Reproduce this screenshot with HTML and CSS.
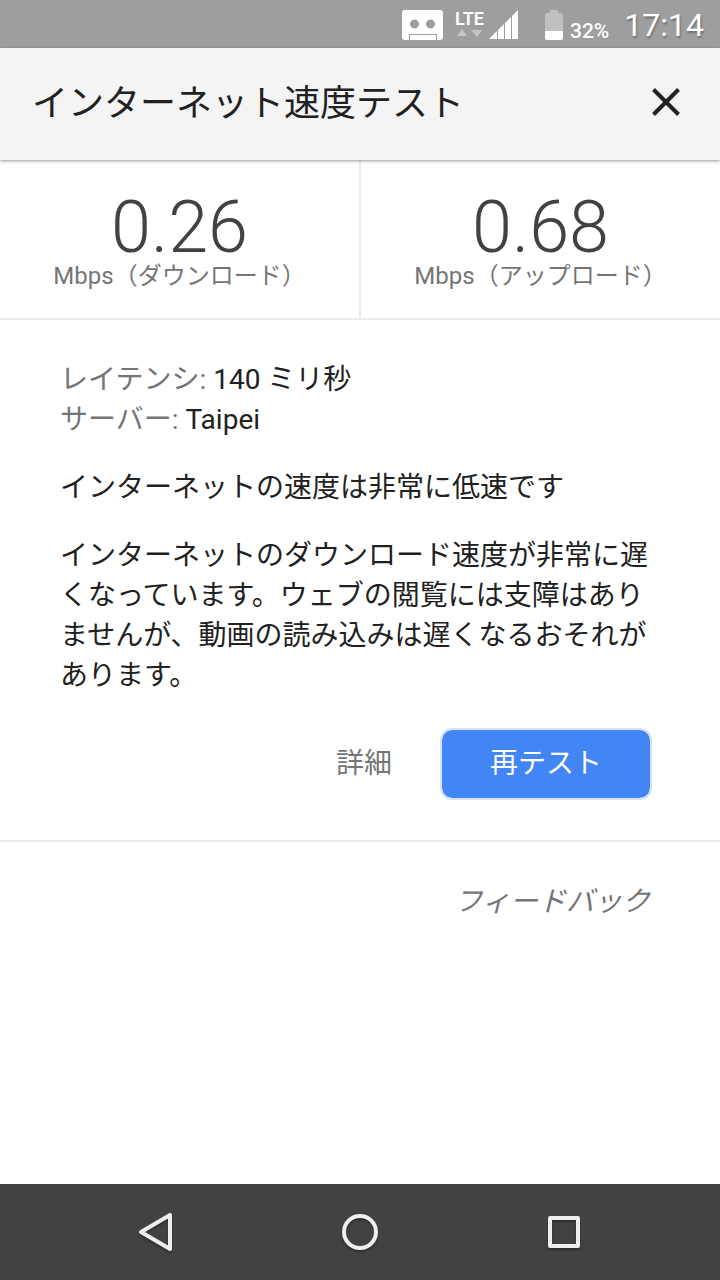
FILE: index.html
```html
<!DOCTYPE html>
<html lang="ja">
<head>
    <meta charset="UTF-8">
    <meta name="viewport" content="width=device-width, initial-scale=1.0">
    <title>インターネット速度テスト</title>
    <link rel="stylesheet" href="styles.css">
</head>
<body>
    <div class="status-bar">
        <svg class="icon-robot" width="42" height="32" viewBox="0 0 42 32">
            <path fill="#fff" fill-rule="evenodd" d="M3 1h36a3 3 0 0 1 3 3v24a3 3 0 0 1-3 3h-3v-6H8v6H4a3 3 0 0 1-3-3V4a3 3 0 0 1 2-3zM13.500 10.500a4.500 4.500 0 1 0 0 9 4.500 4.500 0 0 0 0-9zM29.500 10.500a4.500 4.500 0 1 0 0 9 4.500 4.500 0 0 0 0-9z"/>
            <path fill="#fff" d="M9 26h26v5H9z"/>
        </svg>
        <div class="network">
            <span class="network-type">LTE</span>
            <svg width="28" height="8" viewBox="0 0 28 8">
                <path fill="#c6c6c6" d="M2 7l5-7 5 7zM16 1h11l-5 7z"/>
            </svg>
        </div>
        <svg class="icon-signal" width="30" height="30" viewBox="0 0 30 30">
            <path fill="#fff" d="M0 29l8-8v8zM9 20l6-6v15H9zM16 13l6-6v22h-6zM23 6l6-6v29h-6z"/>
        </svg>
        <svg class="icon-battery" width="20" height="32" viewBox="0 0 20 32">
            <path fill="#c0c0c0" d="M6 1h8v3h3a2 2 0 0 1 2 2v16H1V6a2 2 0 0 1 2-2h3z"/>
            <path fill="#fff" d="M1 22h18v7a2 2 0 0 1-2 2H3a2 2 0 0 1-2-2z"/>
        </svg>
        <span class="battery-level">32%</span>
        <span class="clock">17:14</span>
    </div>

    <header class="header">
        <h1>インターネット速度テスト</h1>
        <button class="close" type="button" aria-label="閉じる">
            <svg width="28" height="28" viewBox="0 0 28 28">
                <path stroke="#212121" stroke-width="4" d="M1.500 1.500l25 25M26.500 1.500l-25 25"/>
            </svg>
        </button>
    </header>

    <main>
        <section class="results">
            <div class="result">
                <div class="value">0.26</div>
                <div class="unit">Mbps（ダウンロード）</div>
            </div>
            <div class="result">
                <div class="value">0.68</div>
                <div class="unit">Mbps（アップロード）</div>
            </div>
        </section>

        <section class="details">
            <div><span class="label">レイテンシ:</span> 140 ミリ秒</div>
            <div><span class="label">サーバー:</span> Taipei</div>
            <p>インターネットの速度は非常に低速です</p>
            <p>インターネットのダウンロード速度が非常に遅くなっています。ウェブの閲覧には支障はありませんが、動画の読み込みは遅くなるおそれがあります。</p>
            <div class="actions">
                <button class="more" type="button">詳細</button>
                <button class="retest" type="button">再テスト</button>
            </div>
        </section>

        <div class="feedback">
            <a href="#">フィードバック</a>
        </div>
    </main>

    <nav class="nav-bar">
        <button type="button" aria-label="戻る">
            <svg width="40" height="40" viewBox="0 0 40 40">
                <path d="M34 3v34L5 20z"/>
            </svg>
        </button>
        <button type="button" aria-label="ホーム">
            <svg width="40" height="40" viewBox="0 0 40 40">
                <circle cx="20" cy="20" r="16"/>
            </svg>
        </button>
        <button type="button" aria-label="最近使ったアプリ">
            <svg width="40" height="40" viewBox="0 0 40 40">
                <rect x="6" y="6" width="28" height="28"/>
            </svg>
        </button>
    </nav>
</body>
</html>
```

FILE: styles.css
```css
* {
    margin: 0;
    padding: 0;
    box-sizing: border-box;
}

body {
    display: flex;
    flex-direction: column;
    min-height: 100vh;
    background: #fff;
    color: #212121;
    font-family: Roboto, "Noto Sans CJK JP", sans-serif;
    font-size: 28px;
    line-height: 40px;
}

button {
    border: none;
    background: none;
    font: inherit;
    cursor: pointer;
}

svg {
    display: block;
    fill: none;
}

.status-bar {
    display: flex;
    align-items: center;
    justify-content: flex-end;
    height: 48px;
    padding: 2px 16px 0 0;
    background: #9e9e9e;
    color: #fff;
}

.network {
    margin: 0 5px 4px 12px;
}

.network-type {
    display: block;
    font-size: 18px;
    font-weight: 600;
    line-height: 20px;
}

.icon-battery {
    margin: 0 6px 0 25px;
}

.battery-level {
    margin: 12px 15px 0 0;
    font-size: 21px;
    font-weight: 500;
    line-height: 24px;
}

.clock {
    font-size: 32px;
    text-shadow: 1px 2px 2px rgba(0, 0, 0, 0.3);
}

.header {
    display: flex;
    align-items: center;
    justify-content: space-between;
    height: 112px;
    padding: 0 32px;
    background: #f4f4f4;
    box-shadow: 0 1px 3px rgba(0, 0, 0, 0.4);
    z-index: 1;
}

.header h1 {
    font-size: 36px;
    font-weight: 400;
}

.close {
    padding: 8px 8px 12px;
}

main {
    flex: 1;
}

.results {
    display: grid;
    grid-template-columns: 1fr 1fr;
    border-bottom: 2px solid #ebebeb;
}

.result {
    padding: 32px 0 30px;
    text-align: center;
}

.result:first-child {
    border-right: 1px solid #ebebeb;
}

.result:last-child {
    border-left: 1px solid #ebebeb;
}

.value {
    color: #424242;
    font-size: 72px;
    font-weight: 300;
    line-height: 72px;
}

.unit {
    color: #757575;
    font-size: 24px;
    line-height: 24px;
}

.details {
    padding: 40px 60px;
    border-bottom: 2px solid #ebebeb;
}

.details p {
    margin-top: 28px;
}

.label {
    color: #757575;
}

.actions {
    display: flex;
    align-items: center;
    justify-content: flex-end;
    gap: 48px;
    margin-top: 32px;
    padding-right: 8px;
}

.more {
    color: #757575;
}

.retest {
    padding: 14px 48px;
    border: 2px solid #d9e1f5;
    border-radius: 12px;
    background: #4285f4;
    background-clip: padding-box;
    color: #fff;
}

.feedback {
    padding: 40px 70px;
    text-align: right;
}

.feedback a {
    color: #757575;
    font-style: italic;
    text-decoration: none;
}

.nav-bar {
    display: flex;
    align-items: center;
    justify-content: center;
    gap: 164px;
    height: 96px;
    background: #424242;
}

.nav-bar svg {
    stroke: #eee;
    stroke-width: 4;
    stroke-linejoin: round;
    filter: drop-shadow(0 2px 1px rgba(0, 0, 0, 0.3));
}
```
